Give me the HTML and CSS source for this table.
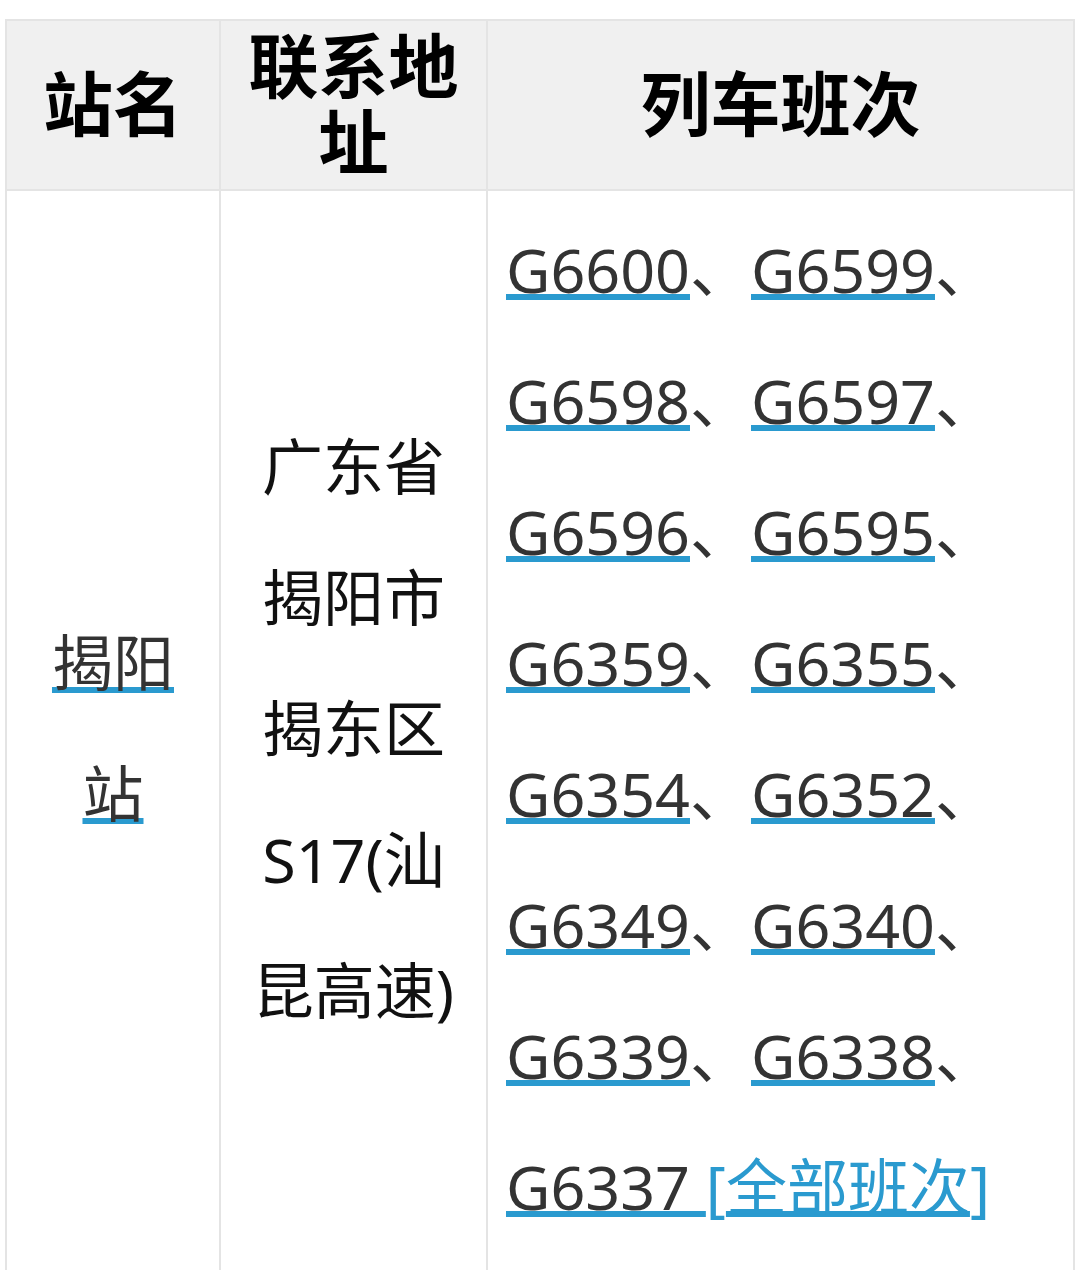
FILE: index.html
```html
<!DOCTYPE html>
<html lang="zh-CN">
<head>
<meta charset="utf-8">
<title>揭阳站</title>
<link rel="stylesheet" href="styles.css">
</head>
<body>
<table class="stations">
  <colgroup>
    <col class="c-name">
    <col class="c-addr">
    <col class="c-train">
  </colgroup>
  <thead>
    <tr>
      <th>站名</th>
      <th>联系地址</th>
      <th>列车班次</th>
    </tr>
  </thead>
  <tbody>
    <tr>
      <td class="name"><a class="lnk" href="#">揭阳站</a></td>
      <td class="addr">广东省揭阳市揭东区S17(汕昆高速)</td>
      <td class="trains"><a class="lnk" href="#">G6600</a>、<a class="lnk" href="#">G6599</a>、<a class="lnk" href="#">G6598</a>、<a class="lnk" href="#">G6597</a>、<a class="lnk" href="#">G6596</a>、<a class="lnk" href="#">G6595</a>、<a class="lnk" href="#">G6359</a>、<a class="lnk" href="#">G6355</a>、<a class="lnk" href="#">G6354</a>、<a class="lnk" href="#">G6352</a>、<a class="lnk" href="#">G6349</a>、<a class="lnk" href="#">G6340</a>、<a class="lnk" href="#">G6339</a>、<a class="lnk" href="#">G6338</a>、<a class="lnk" href="#">G6337&nbsp;</a><span class="more">[<a class="lnk blue" href="#">全部班次</a>]</span></td>
    </tr>
  </tbody>
</table>
</body>
</html>
```

FILE: styles.css
```css
html, body {
  margin: 0;
  padding: 0;
  background: #ffffff;
}

body {
  font-family: "Noto Sans", "Noto Sans CJK SC", sans-serif;
  padding: 19px 0 0 5px;
}

.stations {
  border-collapse: collapse;
  table-layout: fixed;
  width: 1068px;
}

.c-name { width: 214px; }
.c-addr { width: 267px; }
.c-train { width: 587px; }

.stations th,
.stations td {
  border: 2px solid #e4e4e4;
}

.stations th {
  background: #f0f0f0;
  color: #000;
  font-family: "Noto Sans CJK SC", sans-serif;
  font-weight: 700;
  font-size: 70px;
  line-height: 76px;
  padding: 4px 14px 12px 14px;
  text-align: center;
  vertical-align: middle;
}

.stations td {
  font-size: 61px;
  line-height: 131px;
  color: #333;
  padding: 13px 18px 23px 18px;
  vertical-align: middle;
}

.stations td.name,
.stations td.addr {
  text-align: center;
}

.stations td.addr {
  color: #111;
}

.stations td.trains {
  text-align: left;
  padding-left: 18px;
}

.lnk {
  color: #333;
  text-decoration: underline;
  text-decoration-color: #2a9acf;
  text-decoration-thickness: 6px;
  text-underline-offset: 1px;
  text-decoration-skip-ink: none;
}

.more {
  color: #2a9acf;
}

.lnk.blue {
  color: #2a9acf;
}
```
